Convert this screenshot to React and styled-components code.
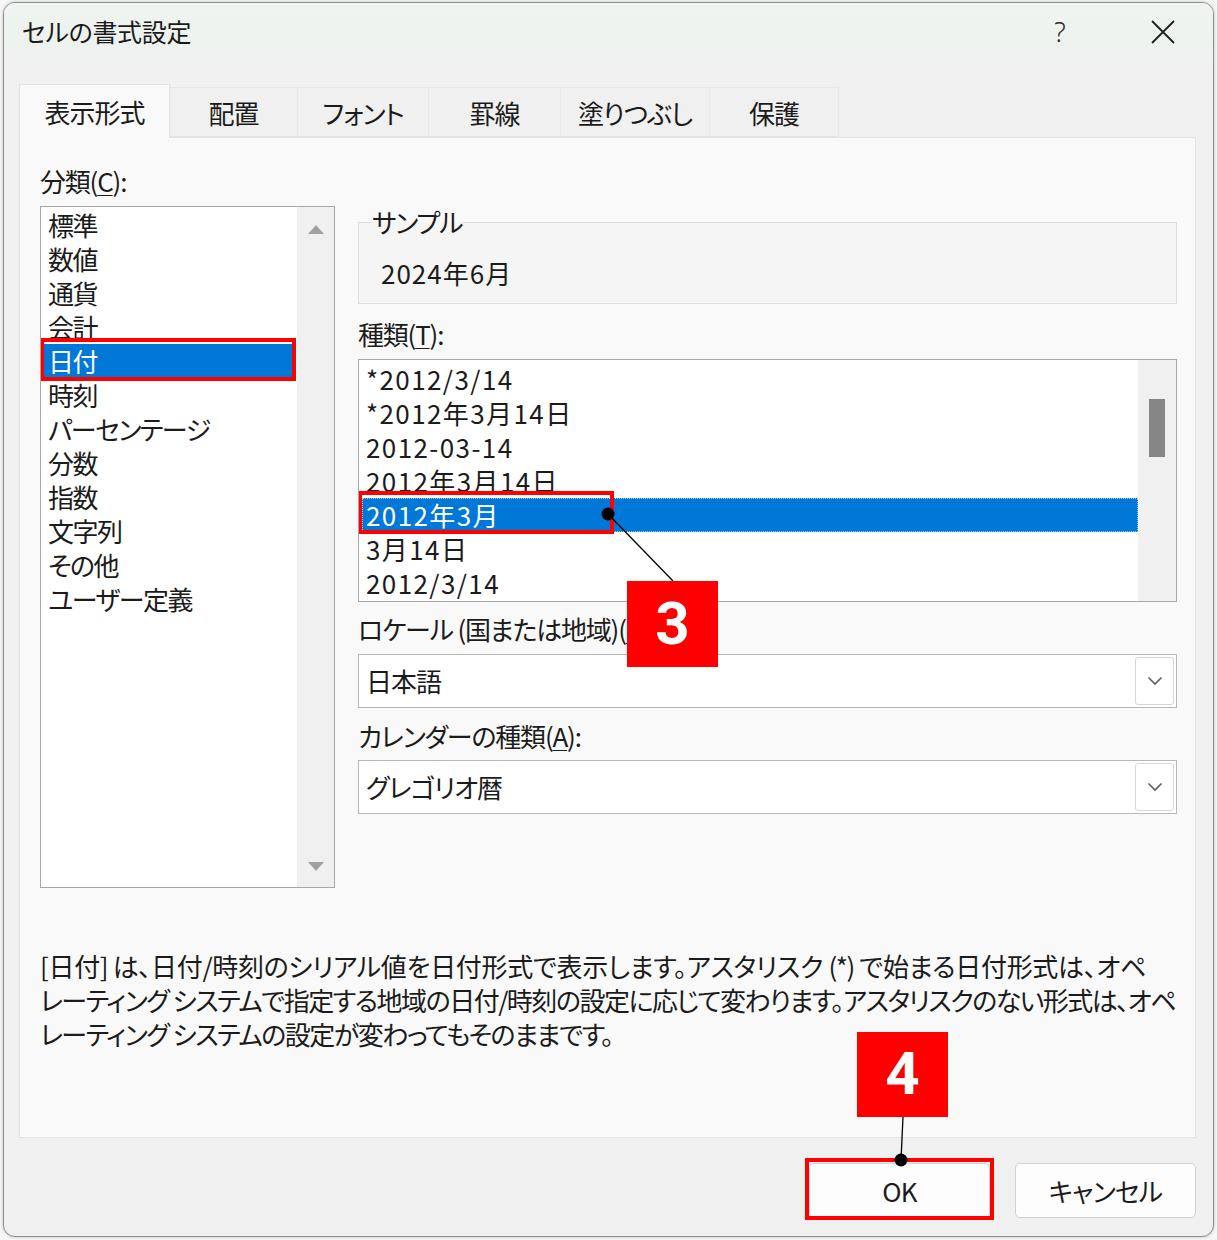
import React from 'react';
import styled, { createGlobalStyle } from 'styled-components';

const font = `"Noto Sans CJK JP", "Noto Sans", sans-serif`;

const Global = createGlobalStyle`
  html, body { margin: 0; padding: 0; background: #f6f6f6; }
  body { font-family: ${font}; font-feature-settings: "palt"; color: #1b1b1b; }
  * { box-sizing: border-box; }
`;

const Page = styled.div`
  position: relative;
  width: 1217px;
  height: 1240px;
  padding: 2px 3px 3px 3px;
`;

const Dialog = styled.div`
  height: 100%;
  display: flex;
  flex-direction: column;
  background: #f0f0f0;
  border: 1px solid #8e8e8e;
  border-radius: 12px;
  overflow: hidden;
  box-shadow: 0 0 3px rgba(0, 0, 0, 0.25);
`;

const TitleBar = styled.div`
  flex: 0 0 62px;
  display: flex;
  align-items: center;
  padding: 0 30px 5px 18px;
  background: linear-gradient(180deg, #eff4f1 0%, #eef2ef 70%, #f0f0f0 100%);
`;

const Title = styled.div`
  flex: 1;
  font-size: 25px;
  line-height: 1;
  color: #1a1a1a;
  letter-spacing: -0.3px;
`;

const TitleControls = styled.div`
  display: flex;
  align-items: center;
  gap: 63px;
`;

const Help = styled.div`
  width: 40px;
  text-align: center;
  font-family: "Noto Sans", sans-serif;
  font-size: 27px;
  font-weight: 300;
  color: #2a2a2a;
`;

const CloseBox = styled.div`
  width: 40px;
  height: 40px;
  display: flex;
  align-items: center;
  justify-content: center;
`;

const Body = styled.div`
  flex: 1;
  display: flex;
  flex-direction: column;
  padding: 19px 17px 0 15px;
`;

const TabRow = styled.div`
  display: flex;
  align-items: flex-end;
  height: 53px;
  position: relative;
  z-index: 1;
`;

const Tab = styled.div`
  flex: 0 0 ${p => p.w}px;
  height: ${p => (p.active ? 54 : 50)}px;
  margin-bottom: ${p => (p.active ? -1 : 0)}px;
  display: flex;
  align-items: center;
  justify-content: center;
  font-size: 26px;
  letter-spacing: -1px;
  background: ${p => (p.active ? '#f9f9f9' : '#f0f0f0')};
  border: 1px solid ${p => (p.active ? '#e2e2e2' : '#e8e8e8')};
  border-bottom: ${p => (p.active ? 'none' : '1px solid #e3e3e3')};
  border-left: ${p => (p.first || p.active ? undefined : 'none')};
  color: #1b1b1b;
`;

const Panel = styled.div`
  flex: 0 0 1001px;
  background: #f9f9f9;
  border: 1px solid #e3e3e3;
  padding: 26px 18px 0 20px;
  display: flex;
  flex-direction: column;
`;

const TopGrid = styled.div`
  display: grid;
  grid-template-columns: 295px 1fr;
  column-gap: 23px;
`;

const Column = styled.div`
  display: flex;
  flex-direction: column;
`;

const Label = styled.div`
  font-size: 26px;
  line-height: 34px;
  white-space: nowrap;
  letter-spacing: -1.2px;
  margin-top: ${p => p.mt || 0}px;
`;

const U = styled.span`
  text-decoration: underline;
  text-underline-offset: 3px;
  text-decoration-thickness: 1px;
`;

const CategoryList = styled.div`
  margin-top: 8px;
  height: 682px;
  border: 1px solid #a6a6a6;
  background: #fff;
  display: flex;
`;

const ItemsCol = styled.div`
  flex: 1;
  padding-top: ${p => p.pt || 0}px;
  overflow: hidden;
  letter-spacing: ${p => p.ls}px;
`;

const Item = styled.div`
  position: relative;
  height: 34px;
  line-height: 34px;
  font-size: 26px;
  white-space: nowrap;
  margin: 0 ${p => p.mr || 0}px 0 ${p => p.ml || 0}px;
  padding-left: ${p => p.pl || 0}px;
  background: ${p => (p.selected ? '#0078d7' : 'transparent')};
  color: ${p => (p.selected ? '#fff' : '#1b1b1b')};
  outline: ${p => (p.focus ? '1px dotted #9cc7ee' : 'none')};
  outline-offset: -1px;
`;

const Marker = styled.div`
  position: absolute;
  border: 4px solid #f00;
  top: ${p => p.t}px;
  bottom: ${p => p.b}px;
  left: ${p => p.l}px;
  ${p => (p.w ? `width: ${p.w}px;` : `right: ${p.r}px;`)}
  pointer-events: none;
`;

const ArrowScroll = styled.div`
  flex: 0 0 37px;
  background: #f0f0f0;
  display: flex;
  flex-direction: column;
  align-items: center;
  justify-content: space-between;
  padding: 18px 0 16px;
`;

const Triangle = styled.div`
  width: 0;
  height: 0;
  border-left: 8px solid transparent;
  border-right: 8px solid transparent;
  ${p => (p.down ? 'border-top: 9px solid #a0a0a0;' : 'border-bottom: 9px solid #a0a0a0;')}
`;

const Sample = styled.fieldset`
  margin: 42px 0 0 0;
  min-width: 0;
  border: 1px solid #dedede;
  background: #f5f5f5;
  padding: 18px 22px 13px;
`;

const Legend = styled.legend`
  font-size: 26px;
  line-height: 32px;
  padding: 0 1px;
  margin-left: -10px;
  letter-spacing: -1.2px;
`;

const SampleValue = styled.div`
  font-size: 26px;
  line-height: 34px;
  letter-spacing: 1px;
`;

const TypeList = styled.div`
  margin-top: 8px;
  height: 243px;
  border: 1px solid #a6a6a6;
  background: #fff;
  display: flex;
  overflow: hidden;
`;

const ThumbScroll = styled.div`
  flex: 0 0 38px;
  background: #f0f0f0;
  display: flex;
  justify-content: center;
  padding-top: 39px;
`;

const Thumb = styled.div`
  width: 16px;
  height: 58px;
  background: #868686;
`;

const Select = styled.div`
  margin-top: ${p => p.mt}px;
  height: 54px;
  border: 1px solid #b8b8b8;
  background: #fff;
  display: flex;
  align-items: center;
  padding: 2px 2px 2px 7px;
`;

const SelectText = styled.div`
  flex: 1;
  font-size: 26px;
  line-height: 34px;
  letter-spacing: -1px;
`;

const DropButton = styled.div`
  width: 39px;
  height: 100%;
  border: 1px solid #d6d6d6;
  border-radius: 3px;
  display: flex;
  align-items: center;
  justify-content: center;
  background: #fff;
`;

const Description = styled.div`
  margin-top: 61px;
  font-size: 26px;
  line-height: 34px;
  letter-spacing: -1.5px;
`;

const DescLine = styled.div`
  white-space: nowrap;
  ${p => (p.w ? `width: ${p.w}px; text-align: justify; text-align-last: justify; text-justify: inter-character;` : '')}
`;

const Footer = styled.div`
  display: flex;
  justify-content: flex-end;
  gap: 25px;
  padding: 25px 0 0 0;
`;

const Button = styled.div`
  position: relative;
  width: 181px;
  height: 55px;
  border: 1px solid #d2d2d2;
  border-radius: 5px;
  background: #fdfdfd;
  display: flex;
  align-items: center;
  justify-content: center;
  font-size: 26px;
  letter-spacing: -0.8px;
  color: #1b1b1b;
`;

const Overlay = styled.svg`
  position: absolute;
  left: 0;
  top: 0;
  pointer-events: none;
`;

const Badge = styled.div`
  position: absolute;
  left: ${p => p.x}px;
  top: ${p => p.y}px;
  width: 91px;
  height: ${p => p.h}px;
  background: #f00;
  color: #fff;
  font-family: Roboto, "Noto Sans", sans-serif;
  font-weight: 700;
  font-size: 60px;
  display: flex;
  align-items: center;
  justify-content: center;
  padding-bottom: 2px;
`;

const Chevron = () => (
  <svg width="16" height="10" viewBox="0 0 16 10">
    <path d="M1.5 1.5 L8 8 L14.5 1.5" fill="none" stroke="#5f5f5f" strokeWidth="1.6" />
  </svg>
);

const categories = ['標準', '数値', '通貨', '会計', '日付', '時刻', 'パーセンテージ', '分数', '指数', '文字列', 'その他', 'ユーザー定義'];
const types = ['*2012/3/14', '*2012年3月14日', '2012-03-14', '2012年3月14日', '2012年3月', '3月14日', '2012/3/14'];
const tabs = [
  ['表示形式', 151],
  ['配置', 128],
  ['フォント', 131],
  ['罫線', 132],
  ['塗りつぶし', 149],
  ['保護', 129],
];

export default function App() {
  return (
    <Page>
      <Global />
      <Dialog>
        <TitleBar>
          <Title>セルの書式設定</Title>
          <TitleControls>
            <Help>?</Help>
            <CloseBox>
              <svg width="24" height="24" viewBox="0 0 24 24">
                <path d="M1 1 L23 23 M23 1 L1 23" stroke="#1f1f1f" strokeWidth="1.8" fill="none" />
              </svg>
            </CloseBox>
          </TitleControls>
        </TitleBar>
        <Body>
          <TabRow>
            {tabs.map(([t, w], i) => (
              <Tab key={t} w={w} active={i === 0} first={i === 0}>
                {t}
              </Tab>
            ))}
          </TabRow>
          <Panel>
            <TopGrid>
              <Column>
                <Label>
                  分類(<U>C</U>):
                </Label>
                <CategoryList>
                  <ItemsCol pt={1} ls={-1.5}>
                    {categories.map(c => (
                      <Item key={c} ml={1} mr={4} pl={6} selected={c === '日付'}>
                        {c}
                        {c === '日付' && <Marker t={-6} b={-3} l={-2} r={-3} />}
                      </Item>
                    ))}
                  </ItemsCol>
                  <ArrowScroll>
                    <Triangle />
                    <Triangle down />
                  </ArrowScroll>
                </CategoryList>
              </Column>
              <Column>
                <Sample>
                  <Legend>サンプル</Legend>
                  <SampleValue>2024年6月</SampleValue>
                </Sample>
                <Label mt={13}>
                  種類(<U>T</U>):
                </Label>
                <TypeList>
                  <ItemsCol pt={2} ls={1.4}>
                    {types.map((t, i) => (
                      <Item key={i} ml={3} pl={4} selected={i === 4} focus={i === 4}>
                        {t}
                        {i === 4 && <Marker t={-7} b={-2} l={-4} w={256} />}
                      </Item>
                    ))}
                  </ItemsCol>
                  <ThumbScroll>
                    <Thumb />
                  </ThumbScroll>
                </TypeList>
                <Label mt={10}>
                  ロケール (国または地域)(<U>L</U>):
                </Label>
                <Select mt={8}>
                  <SelectText>日本語</SelectText>
                  <DropButton>
                    <Chevron />
                  </DropButton>
                </Select>
                <Label mt={11}>
                  カレンダーの種類(<U>A</U>):
                </Label>
                <Select mt={7}>
                  <SelectText>グレゴリオ暦</SelectText>
                  <DropButton>
                    <Chevron />
                  </DropButton>
                </Select>
              </Column>
            </TopGrid>
            <Description>
              <DescLine w={1105}>
                [日付] は、日付/時刻のシリアル値を日付形式で表示します。アスタリスク (*) で始まる日付形式は、オペ
              </DescLine>
              <DescLine w={1125}>
                レーティング システムで指定する地域の日付/時刻の設定に応じて変わります。アスタリスクのない形式は、オペ
              </DescLine>
              <DescLine>レーティング システムの設定が変わってもそのままです。</DescLine>
            </Description>
          </Panel>
          <Footer>
            <Button>
              OK
              <Marker t={-6} b={-3} l={-5} r={-5} />
            </Button>
            <Button>キャンセル</Button>
          </Footer>
        </Body>
      </Dialog>
      <Overlay width="1217" height="1240" viewBox="0 0 1217 1240">
        <line x1="608" y1="514" x2="673" y2="581" stroke="#000" strokeWidth="1.3" />
        <circle cx="608" cy="514" r="6.5" fill="#000" />
        <line x1="903" y1="1117" x2="901" y2="1160" stroke="#000" strokeWidth="1.3" />
        <circle cx="901" cy="1160" r="6.5" fill="#000" />
      </Overlay>
      <Badge x={627} y={581} h={86}>3</Badge>
      <Badge x={857} y={1032} h={85}>4</Badge>
    </Page>
  );
}
